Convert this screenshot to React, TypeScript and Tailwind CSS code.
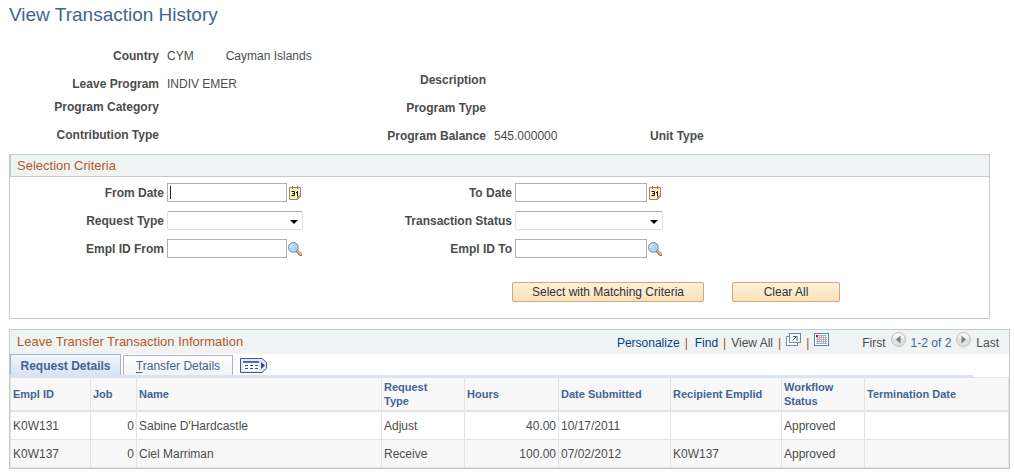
import type { ReactNode } from 'react';

interface Transaction {
  emplId: string;
  job: number;
  name: string;
  requestType: string;
  hours: string;
  submitted: string;
  recipient: string;
  status: string;
  terminated: string;
}

const transactions: Transaction[] = [
  {
    emplId: 'K0W131',
    job: 0,
    name: "Sabine D'Hardcastle",
    requestType: 'Adjust',
    hours: '40.00',
    submitted: '10/17/2011',
    recipient: '',
    status: 'Approved',
    terminated: '',
  },
  {
    emplId: 'K0W137',
    job: 0,
    name: 'Ciel Marriman',
    requestType: 'Receive',
    hours: '100.00',
    submitted: '07/02/2012',
    recipient: 'K0W137',
    status: 'Approved',
    terminated: '',
  },
];

// A newline in a label breaks the heading there.
const columns = [
  { label: 'Empl ID', width: 'w-[80px]' },
  { label: 'Job', width: 'w-[46px]' },
  { label: 'Name', width: 'w-[245px]' },
  { label: 'Request\nType', width: 'w-[83px]' },
  { label: 'Hours', width: 'w-[94px]' },
  { label: 'Date Submitted', width: 'w-[112px]' },
  { label: 'Recipient Emplid', width: 'w-[111px]' },
  { label: 'Workflow\nStatus', width: 'w-[83px]' },
  { label: 'Termination Date', width: '' },
];

export default function App() {
  return (
    <main className="bg-white pt-1 pr-1 pb-1 pl-[9px] font-['Liberation_Sans',Arial,sans-serif] text-xs text-[#4c4c4c]">
      <h1 className="text-[19px] leading-[22px] text-[#426492]">View Transaction History</h1>

      <ProgramSummary />
      <SelectionCriteria />
      <TransactionGrid />
    </main>
  );
}

function ProgramSummary() {
  return (
    <dl className="mt-[22px] flex">
      <div className="w-[328px]">
        <Field label="Country" labelWidth="w-[150px]">
          CYM<span className="ml-8">Cayman Islands</span>
        </Field>
        <Field label="Leave Program" labelWidth="w-[150px]" className="mt-3">
          INDIV EMER
        </Field>
        <Field label="Program Category" labelWidth="w-[150px]" className="mt-[7px]" />
        <Field label="Contribution Type" labelWidth="w-[150px]" className="mt-3" />
      </div>
      <div className="w-[313px] pt-6">
        <Field label="Description" labelWidth="w-[149px]" />
        <Field label="Program Type" labelWidth="w-[149px]" className="mt-3" />
        <Field label="Program Balance" labelWidth="w-[149px]" className="mt-3">
          545.000000
        </Field>
      </div>
      <div className="pt-20">
        <Field label="Unit Type" labelWidth="" />
      </div>
    </dl>
  );
}

function Field({
  label,
  labelWidth,
  className = '',
  children,
}: {
  label: string;
  labelWidth: string;
  className?: string;
  children?: ReactNode;
}) {
  return (
    <div className={`flex gap-2 leading-4 whitespace-nowrap ${className}`}>
      <dt className={`text-right font-bold ${labelWidth}`}>{label}</dt>
      <dd>{children}</dd>
    </div>
  );
}

function SelectionCriteria() {
  return (
    <section className="mt-[10px] mr-5 border border-[#c5c9d3]">
      <h2 className="border-b border-l border-[#c5c9d3] bg-[#eff3f4] pl-1.5 text-[13px] leading-[21px] text-[#b35a1f]">
        Selection Criteria
      </h2>
      <form onSubmit={(e) => e.preventDefault()} className="pt-1.5 pb-4">
        <div className="grid grid-cols-[154px_136px_206px_1fr] items-center gap-x-[3px] gap-y-[9px]">
          <FieldLabel id="from-date">From Date</FieldLabel>
          <div className="flex h-[19px] items-center gap-0.5">
            <input
              id="from-date"
              className="h-[19px] w-[120px] border border-[#b0b0b0] bg-[linear-gradient(#222,#222)] bg-[length:1px_13px] bg-[position:2px_2px] bg-no-repeat px-1 outline-none"
            />
            <CalendarButton label="Choose from date" />
          </div>
          <FieldLabel id="to-date">To Date</FieldLabel>
          <div className="flex h-[19px] items-center gap-0.5">
            <input id="to-date" className="h-[19px] w-[132px] border border-[#b0b0b0] px-1 outline-none" />
            <CalendarButton label="Choose to date" />
          </div>

          <FieldLabel id="request-type">Request Type</FieldLabel>
          <Dropdown id="request-type" width="w-[136px]" />
          <FieldLabel id="status">Transaction Status</FieldLabel>
          <Dropdown id="status" width="w-[148px]" />

          <FieldLabel id="empl-from">Empl ID From</FieldLabel>
          <div className="flex h-[19px] items-center gap-px">
            <input id="empl-from" className="h-[19px] w-[120px] border border-[#b0b0b0] px-1 outline-none" />
            <LookupButton label="Look up Empl ID From" />
          </div>
          <FieldLabel id="empl-to">Empl ID To</FieldLabel>
          <div className="flex h-[19px] items-center gap-px">
            <input id="empl-to" className="h-[19px] w-[132px] border border-[#b0b0b0] px-1 outline-none" />
            <LookupButton label="Look up Empl ID To" />
          </div>
        </div>

        <div className="mt-6 flex gap-7 pl-[502px]">
          <ActionButton width="w-[192px]">Select with Matching Criteria</ActionButton>
          <ActionButton width="w-[108px]">Clear All</ActionButton>
        </div>
      </form>
    </section>
  );
}

function FieldLabel({ id, children }: { id: string; children: ReactNode }) {
  return (
    <label htmlFor={id} className="pt-0.5 text-right leading-[17px] font-bold">
      {children}
    </label>
  );
}

function Dropdown({ id, width }: { id: string; width: string }) {
  return (
    <div className={`relative h-[19px] ${width}`}>
      <select
        id={id}
        className="block h-[19px] w-full appearance-none rounded-[2px] border border-[#e0e2ea] border-t-[#a9a9ae] bg-white px-1 outline-none"
      >
        <option value=""></option>
      </select>
      <svg viewBox="0 0 8 4" className="pointer-events-none absolute top-[9px] right-[5px] h-1 w-2">
        <path d="M0 0h8L4 4z" fill="#000" />
      </svg>
    </div>
  );
}

function ActionButton({ width, children }: { width: string; children: ReactNode }) {
  return (
    <button
      type="button"
      className={`h-5 rounded-[2px] border border-[#d9a577] bg-linear-to-b from-[#fdf0dc] to-[#f9e2b8] leading-[18px] text-[#333] ${width}`}
    >
      {children}
    </button>
  );
}

function CalendarButton({ label }: { label: string }) {
  return (
    <button type="button" aria-label={label} className="mt-px h-[14px] w-3">
      <svg viewBox="0 0 12 14" className="block h-[14px] w-3">
        <path d="M.5 1.5h11v9l-3 3h-8z" fill="#fdf0c4" stroke="#a08858" />
        <path d="M8.500 13.500v-3h3z" fill="#d8b870" stroke="#a08858" />
        <path d="M3.500 0v3M8.500 0v3" stroke="#8a744a" />
        <path d="M2.500 5.500h3v4h-3M3.500 7.500h2M7 6.500h1.500M8.500 5v5" fill="none" stroke="#111" />
      </svg>
    </button>
  );
}

function LookupButton({ label }: { label: string }) {
  return (
    <button type="button" aria-label={label} className="mt-px h-[14px] w-[14px]">
      <svg viewBox="0 0 14 14" className="block h-[14px] w-[14px]">
        <path d="M9 9l3.800 3.800" stroke="#8c6a50" strokeWidth="3" strokeLinecap="round" />
        <path d="M9.500 9.200l3.200 3.200" stroke="#f0b080" strokeWidth="1.800" strokeLinecap="round" />
        <circle cx="5.400" cy="5.400" r="4.900" fill="#a9d4f8" stroke="#7288a8" />
        <path d="M2.500 5.600a3 3 0 0 1 3-3.200" fill="none" stroke="#e8f6ff" strokeWidth="1.800" />
      </svg>
    </button>
  );
}

function TransactionGrid() {
  return (
    <section className="mt-2.5 border border-[#c5c9d3]">
      <header className="flex h-6 items-center bg-[#eff3f4] pl-[7px]">
        <h2 className="text-[13px] text-[#b35a1f]">Leave Transfer Transaction Information</h2>
        <GridToolbar />
      </header>

      <div className="flex h-[21px] items-end">
        <button
          type="button"
          className="h-[21px] w-[111px] border border-b-0 border-[#aab3c8] bg-linear-to-b from-[#f1f5fc] to-[#d8e3f4] pt-0.5 font-bold text-[#426492]"
        >
          Request Details
        </button>
        <button
          type="button"
          accessKey="t"
          className="ml-0.5 h-5 w-[110px] border border-b-0 border-[#aab3c8] bg-linear-to-b from-white to-[#f3f3f3] text-[#426492]"
        >
          <span className="underline underline-offset-2">T</span>ransfer Details
        </button>
        <button type="button" aria-label="Show all columns" className="mb-0.5 ml-[7px]">
          <ShowColumnsIcon />
        </button>
      </div>
      <div className="mr-9 h-0.5 bg-[#d8e3f4]" />

      <table className="w-full table-fixed border-separate border-spacing-0 border-t border-l border-[#e3e3e3]">
        <thead>
          <tr className="h-[34px] bg-[#f8f8f8] text-left text-[11px] leading-[14px] text-[#426492]">
            {columns.map((c) => (
              <th
                key={c.label}
                scope="col"
                className={`border-r border-b-2 border-[#e3e3e3] px-0.5 whitespace-pre-line ${c.width}`}
              >
                {c.label}
              </th>
            ))}
          </tr>
        </thead>
        <tbody>
          {transactions.map((t) => (
            <tr key={t.emplId} className="h-7 even:bg-[#f8f8f8]">
              <Cell>{t.emplId}</Cell>
              <Cell numeric>{t.job}</Cell>
              <Cell>{t.name}</Cell>
              <Cell>{t.requestType}</Cell>
              <Cell numeric>{t.hours}</Cell>
              <Cell>{t.submitted}</Cell>
              <Cell>{t.recipient}</Cell>
              <Cell>{t.status}</Cell>
              <Cell>{t.terminated}</Cell>
            </tr>
          ))}
        </tbody>
      </table>
    </section>
  );
}

function Cell({ numeric = false, children }: { numeric?: boolean; children: ReactNode }) {
  return (
    <td className={`border-r border-b border-[#e3e3e3] px-0.5 ${numeric ? 'text-right' : ''}`}>
      {children}
    </td>
  );
}

function GridToolbar() {
  return (
    <div className="ml-auto flex items-center pt-0.5 pr-2.5 whitespace-nowrap">
      <div className="flex items-center gap-[5px]">
        <a href="#personalize" className="text-[#00438c]">
          Personalize
        </a>
        <Divider />
        <a href="#find" className="ml-0.5 text-[#00438c]">
          Find
        </a>
        <Divider />
        <span>View All</span>
        <Divider />
        <a href="#zoom" aria-label="Zoom grid" className="pb-2">
          <PopOutIcon />
        </a>
        <Divider />
        <a href="#download" aria-label="Download to spreadsheet" className="pb-2">
          <SpreadsheetIcon />
        </a>
      </div>
      <div className="ml-[33px] flex items-center gap-[5px]">
        <span>First</span>
        <PageButton label="Previous page" path="M9.500 3.500v8L5 7.500z" />
        <span className="text-[#426492]">1-2 of 2</span>
        <PageButton label="Next page" path="M5.500 3.500v8L10 7.500z" />
        <span>Last</span>
      </div>
    </div>
  );
}

function Divider() {
  return <span className="text-[#a8502a]">|</span>;
}

function PageButton({ label, path }: { label: string; path: string }) {
  return (
    <button type="button" aria-label={label} className="pb-2">
      <svg viewBox="0 0 15 15" className="block h-[15px] w-[15px]">
        <circle cx="7.500" cy="7.500" r="7" fill="#e0e0e0" stroke="#c2c2c2" />
        <path d="M2 6.500a5.500 5.500 0 0 1 11 0z" fill="#f6f6f6" />
        <path d={path} fill="#7c7c7c" />
      </svg>
    </button>
  );
}

function PopOutIcon() {
  return (
    <svg viewBox="0 0 15 13" className="block h-[13px] w-[15px]">
      <path d="M3.500 3.500h-3v9h11v-3" fill="#fff" stroke="#7088a4" />
      <rect x="3.500" y=".5" width="11" height="9" fill="#f4f8fc" stroke="#7088a4" />
      <path d="M6.500 7.500l4-4M7 3.500h4v4" fill="none" stroke="#4c6484" />
    </svg>
  );
}

function SpreadsheetIcon() {
  return (
    <svg viewBox="0 0 15 13" className="block h-[13px] w-[15px]">
      <rect width="15" height="13" fill="#fff" />
      <path
        d="M2 2.500h11M2 4.500h11M2 6.500h11M2 8.500h11M2 10.500h11M3.500 2v9M5.500 2v9M7.500 2v9M9.500 2v9M11.500 2v9"
        stroke="#a8a4ae"
        strokeWidth=".8"
      />
      <rect x=".5" y=".5" width="14" height="12" fill="none" stroke="#4c80d4" />
      <rect x="2" y="2" width="2" height="2" fill="#f00" />
    </svg>
  );
}

function ShowColumnsIcon() {
  return (
    <svg viewBox="0 0 27 15" className="block h-[15px] w-[27px]">
      <path d="M.5.5h21.500l4.500 4v6l-4.500 4H.5z" fill="#dfe9fa" stroke="#4a5590" />
      <path d="M3 3h16v10H3z" fill="#fff" />
      <path d="M3 4h16" stroke="#5068b8" strokeWidth="2" />
      <path d="M5 7.500h13M5 10.500h13" stroke="#4a5070" strokeDasharray="3 2" />
      <path d="M21 4l4 3.500-4 3.500z" fill="#3c4888" />
    </svg>
  );
}
